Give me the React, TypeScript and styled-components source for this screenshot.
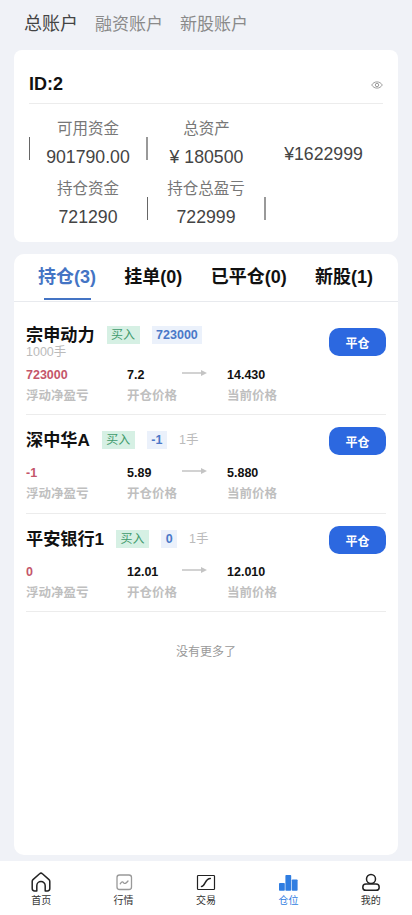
import React from "react";
import styled, { createGlobalStyle } from "styled-components";

const GlobalStyle = createGlobalStyle`
  html, body {
    margin: 0;
    padding: 0;
    background: #f0f2f7;
    font-family: "Liberation Sans", "Noto Sans CJK SC", sans-serif;
  }
  * {
    box-sizing: border-box;
  }
`;

interface Position {
  name: string;
  tagValue: string;
  lots: string;
  profit: string;
  open: string;
  current: string;
  compact?: boolean;
}

const positions: Position[] = [
  { name: "宗申动力", tagValue: "723000", lots: "1000手", profit: "723000", open: "7.2", current: "14.430" },
  { name: "深中华A", tagValue: "-1", lots: "1手", profit: "-1", open: "5.89", current: "5.880", compact: true },
  { name: "平安银行1", tagValue: "0", lots: "1手", profit: "0", open: "12.01", current: "12.010", compact: true },
];

const HomeIcon = () => (
  <svg width="22" height="22" viewBox="0 0 22 22" fill="none" stroke="#222" strokeWidth="1.5" strokeLinejoin="round">
    <path d="M3 8.600 9.600 2.800a2 2 0 0 1 2.800 0L19 8.600a2.400 2.400 0 0 1 .8 1.800v7.200a2.400 2.400 0 0 1-2.400 2.400h-2.200v-5.200a4.200 4.200 0 0 0-8.400 0V20H4.600a2.400 2.400 0 0 1-2.400-2.400v-7.200A2.400 2.400 0 0 1 3 8.600Z" />
  </svg>
);

const MarketIcon = () => (
  <svg width="22" height="22" viewBox="0 0 22 22" fill="none" stroke="#999" strokeWidth="1.3" strokeLinejoin="round" strokeLinecap="round">
    <rect x="4" y="4" width="14.500" height="14.500" rx="2.500" />
    <path d="M7.200 12.800c1.500-2.300 2.500-2.300 3.500-1 1 1.200 2 .8 4.300-1.800" />
  </svg>
);

const TradeIcon = () => (
  <svg width="22" height="22" viewBox="0 0 22 22" fill="none" stroke="#222">
    <rect x="2.500" y="4.500" width="17" height="14" rx="0.800" strokeWidth="1.200" />
    <path d="M6.500 15.500c3.500 0 3.500-8 8.800-8" strokeWidth="1.500" strokeLinecap="round" />
  </svg>
);

const PositionIcon = () => (
  <svg width="22" height="22" viewBox="0 0 22 22" fill="#2f7de1">
    <rect x="2" y="12" width="5.800" height="7.800" rx="0.800" />
    <rect x="8.400" y="4" width="5.800" height="15.800" rx="0.800" />
    <rect x="14.800" y="8.500" width="5.800" height="11.300" rx="0.800" />
  </svg>
);

const MineIcon = () => (
  <svg width="22" height="22" viewBox="0 0 22 22" fill="none" stroke="#222" strokeWidth="1.500">
    <circle cx="11" cy="8" r="4.500" />
    <rect x="2.800" y="13" width="16.400" height="6.300" rx="3.150" fill="#fff" />
  </svg>
);

const EyeIcon = () => (
  <svg width="12" height="12" viewBox="0 0 12 12" fill="none" stroke="#888" strokeWidth="0.8">
    <path d="M.7 6C2 3.900 3.800 2.900 6 2.900S10 3.900 11.300 6C10 8.100 8.200 9.100 6 9.100S2 8.100.7 6Z" />
    <circle cx="6" cy="6" r="1.700" />
  </svg>
);

const ArrowIcon = () => (
  <svg width="26" height="8" viewBox="0 0 26 8">
    <path d="M0 3.300h19V1l6 3-6 3V4.700H0Z" fill="#c4c4c4" />
  </svg>
);

const navItems = [
  { label: "首页", icon: <HomeIcon /> },
  { label: "行情", icon: <MarketIcon /> },
  { label: "交易", icon: <TradeIcon /> },
  { label: "仓位", icon: <PositionIcon />, active: true },
  { label: "我的", icon: <MineIcon /> },
];

const App: React.FC = () => {
  return (
    <Page>
      <GlobalStyle />
      <AccountTabs>
        <AccountTab $active>总账户</AccountTab>
        <AccountTab>融资账户</AccountTab>
        <AccountTab>新股账户</AccountTab>
      </AccountTabs>

      <SummaryCard>
        <SummaryHead>
          <AccountId>ID:2</AccountId>
          <EyeIcon />
        </SummaryHead>
        <StatRow>
          <Separator />
          <Stat $width={116}>
            <StatLabel>可用资金</StatLabel>
            <StatValue>901790.00</StatValue>
          </Stat>
          <Separator $wide />
          <Stat $width={117}>
            <StatLabel>总资产</StatLabel>
            <StatValue>¥ 180500</StatValue>
          </Stat>
          <Stat $width={117}>
            <StatLabel />
            <StatValue>¥1622999</StatValue>
          </Stat>
        </StatRow>
        <StatRow>
          <Stat $width={118}>
            <StatLabel>持仓资金</StatLabel>
            <StatValue>721290</StatValue>
          </Stat>
          <Separator />
          <Stat $width={116}>
            <StatLabel>持仓总盈亏</StatLabel>
            <StatValue>722999</StatValue>
          </Stat>
          <Separator $wide />
        </StatRow>
      </SummaryCard>

      <ListCard>
        <ListTabs>
          <ListTab $active>
            持仓(3)
            <TabLine $active />
          </ListTab>
          <ListTab>
            挂单(0)
            <TabLine />
          </ListTab>
          <ListTab>
            已平仓(0)
            <TabLine />
          </ListTab>
          <ListTab>
            新股(1)
            <TabLine />
          </ListTab>
        </ListTabs>

        <Items>
          {positions.map((p) => (
            <Item key={p.name} $compact={p.compact}>
              <ItemHead>
                <ItemTitle $compact={p.compact}>
                  <StockName>{p.name}</StockName>
                  <BuyTag>买入</BuyTag>
                  <ValueTag>{p.tagValue}</ValueTag>
                  <Lots>{p.lots}</Lots>
                </ItemTitle>
                <CloseButton>平仓</CloseButton>
              </ItemHead>
              <Figures>
                <Figure>
                  <ProfitValue>{p.profit}</ProfitValue>
                  <FigureLabel>浮动净盈亏</FigureLabel>
                </Figure>
                <Figure>
                  <FigureValue>{p.open}</FigureValue>
                  <FigureLabel>开仓价格</FigureLabel>
                </Figure>
                <ArrowCell>
                  <ArrowIcon />
                </ArrowCell>
                <Figure>
                  <FigureValue>{p.current}</FigureValue>
                  <FigureLabel>当前价格</FigureLabel>
                </Figure>
              </Figures>
            </Item>
          ))}
        </Items>
        <NoMore>没有更多了</NoMore>
      </ListCard>

      <BottomNav>
        {navItems.map((n) => (
          <NavItem key={n.label} $active={n.active}>
            {n.icon}
            <span>{n.label}</span>
          </NavItem>
        ))}
      </BottomNav>
    </Page>
  );
};

export default App;

const Page = styled.div`
  width: 412px;
  height: 915px;
  display: flex;
  flex-direction: column;
  background: #f0f2f7;
  overflow: hidden;
`;

const AccountTabs = styled.div`
  height: 50px;
  padding: 0 24px 6px;
  display: flex;
  align-items: center;
  gap: 17px;
`;

const AccountTab = styled.div<{ $active?: boolean }>`
  font-size: ${({ $active }) => ($active ? "18px" : "17px")};
  color: ${({ $active }) => ($active ? "#444" : "#8a8a8a")};
`;

const SummaryCard = styled.div`
  margin: 0 14px;
  height: 192px;
  padding: 14px 15px 0 15px;
  background: #fff;
  border-radius: 8px;
`;

const SummaryHead = styled.div`
  height: 40px;
  padding: 2px 0 0;
  display: flex;
  align-items: center;
  justify-content: space-between;
  border-bottom: 1px solid #ececec;
`;

const AccountId = styled.div`
  font-size: 18px;
  font-weight: 700;
  color: #111;
`;

const StatRow = styled.div`
  height: 60px;
  padding-top: 15px;
  display: flex;
`;

const Stat = styled.div<{ $width: number }>`
  flex: none;
  width: ${({ $width }) => $width}px;
  display: flex;
  flex-direction: column;
  align-items: center;
  gap: 8px;
`;

const StatLabel = styled.div`
  height: 20px;
  line-height: 20px;
  font-size: 15.5px;
  color: #777;
`;

const StatValue = styled.div`
  height: 20px;
  line-height: 20px;
  font-size: 17.7px;
  color: #444;
`;

const Separator = styled.div<{ $wide?: boolean }>`
  flex: none;
  align-self: flex-end;
  margin-bottom: 4px;
  width: ${({ $wide }) => ($wide ? "2px" : "1px")};
  height: 23px;
  background: ${({ $wide }) => ($wide ? "#999" : "#666")};
`;

const ListCard = styled.div`
  margin: 12px 14px 0;
  height: 601px;
  background: #fff;
  border-radius: 10px;
`;

const ListTabs = styled.div`
  height: 48px;
  padding: 0 25px 0 24px;
  display: flex;
  justify-content: space-between;
  border-bottom: 1px solid #e8eaee;
`;

const ListTab = styled.div<{ $active?: boolean }>`
  display: flex;
  flex-direction: column;
  align-items: center;
  justify-content: flex-end;
  font-size: 18px;
  font-weight: 700;
  line-height: 24px;
  color: ${({ $active }) => ($active ? "#4474c4" : "#111")};
`;

const TabLine = styled.div<{ $active?: boolean }>`
  width: 47px;
  height: 2px;
  margin: 9px 0 1px;
  background: ${({ $active }) => ($active ? "#4474c4" : "transparent")};
`;

const Items = styled.div`
  padding: 0 12px;
`;

const Item = styled.div<{ $compact?: boolean }>`
  height: ${({ $compact }) => ($compact ? "99px" : "113px")};
  padding-top: ${({ $compact }) => ($compact ? "12px" : "26px")};
  display: flex;
  flex-direction: column;
  border-bottom: 1px solid #ececec;
  &:last-child {
    height: 98px;
  }
`;

const ItemHead = styled.div`
  display: flex;
  justify-content: space-between;
  align-items: flex-start;
`;

const ItemTitle = styled.div<{ $compact?: boolean }>`
  width: 200px;
  margin-top: ${({ $compact }) => ($compact ? "1px" : "-5px")};
  display: flex;
  flex-wrap: wrap;
  align-items: center;
  column-gap: 12px;
`;

const StockName = styled.div`
  font-size: 17.15px;
  font-weight: 700;
  line-height: 24px;
  color: #111;
`;

const BuyTag = styled.div`
  height: 18px;
  padding: 0 4.5px;
  line-height: 18px;
  font-size: 12px;
  color: #3f9a6c;
  background: #d6f0e4;
`;

const ValueTag = styled.div`
  height: 18px;
  padding: 0 4.5px;
  line-height: 18px;
  font-size: 12.5px;
  font-weight: 700;
  color: #4a78c8;
  background: #ebf1fb;
`;

const Lots = styled.div`
  font-size: 12.5px;
  line-height: 10px;
  color: #bbb;
`;

const CloseButton = styled.button`
  width: 57px;
  height: 28px;
  padding: 0;
  border: 0;
  border-radius: 10px;
  background: #2c68e0;
  color: #fff;
  font-family: inherit;
  font-size: 12px;
  font-weight: 700;
`;

const Figures = styled.div`
  margin-top: 10px;
  display: grid;
  grid-template-columns: 101px 55px 45px 1fr;
`;

const Figure = styled.div`
  display: flex;
  flex-direction: column;
  gap: 4.5px;
`;

const FigureValue = styled.div`
  font-size: 12.5px;
  font-weight: 700;
  line-height: 16px;
  color: #111;
`;

const ProfitValue = styled(FigureValue)`
  color: #c4566a;
`;

const FigureLabel = styled.div`
  font-size: 12.5px;
  font-weight: 700;
  line-height: 16px;
  color: #bfbfbf;
`;

const ArrowCell = styled.div`
  height: 12px;
  display: flex;
  align-items: center;
`;

const NoMore = styled.div`
  margin-top: 32px;
  text-align: center;
  font-size: 12px;
  line-height: 16px;
  color: #999;
`;

const BottomNav = styled.div`
  margin-top: 6px;
  height: 54px;
  display: grid;
  grid-template-columns: repeat(5, 1fr);
  background: #fff;
`;

const NavItem = styled.div<{ $active?: boolean }>`
  display: flex;
  flex-direction: column;
  align-items: center;
  padding-top: 10px;
  font-size: 10px;
  line-height: 16px;
  color: ${({ $active }) => ($active ? "#2f7de1" : "#333")};
  svg {
    display: block;
  }
`;
